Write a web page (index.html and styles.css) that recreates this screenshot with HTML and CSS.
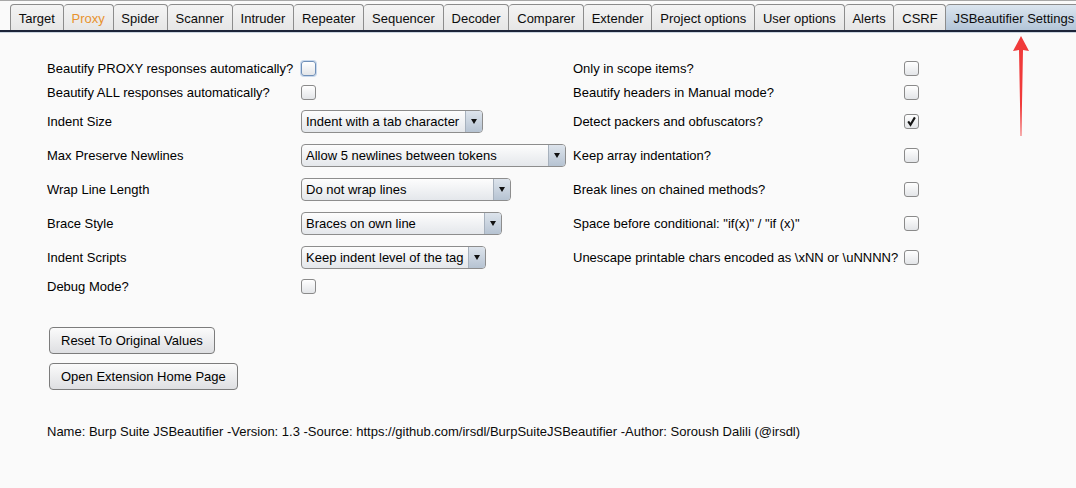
FILE: index.html
```html
<!DOCTYPE html>
<html>
<head>
<meta charset="utf-8">
<link rel="stylesheet" href="styles.css">
</head>
<body>
<div class="app">
  <div class="tabbar">
    <div class="tab">Target</div>
    <div class="tab proxy">Proxy</div>
    <div class="tab">Spider</div>
    <div class="tab">Scanner</div>
    <div class="tab">Intruder</div>
    <div class="tab">Repeater</div>
    <div class="tab">Sequencer</div>
    <div class="tab">Decoder</div>
    <div class="tab">Comparer</div>
    <div class="tab">Extender</div>
    <div class="tab">Project options</div>
    <div class="tab">User options</div>
    <div class="tab">Alerts</div>
    <div class="tab">CSRF</div>
    <div class="tab active">JSBeautifier Settings</div>
  </div>
  <div class="tabline"></div>
  <div class="content">
    <div class="form">
      <div class="lbl">Beautify PROXY responses automatically?</div>
      <div class="ctl"><span class="cb focus"></span></div>
      <div class="lbl">Only in scope items?</div>
      <div class="ctl"><span class="cb"></span></div>

      <div class="lbl">Beautify ALL responses automatically?</div>
      <div class="ctl"><span class="cb"></span></div>
      <div class="lbl">Beautify headers in Manual mode?</div>
      <div class="ctl"><span class="cb"></span></div>

      <div class="lbl">Indent Size</div>
      <div class="ctl"><div class="combo w182"><span class="val">Indent with a tab character</span><span class="arr"></span></div></div>
      <div class="lbl">Detect packers and obfuscators?</div>
      <div class="ctl"><span class="cb checked"><svg width="11" height="11" viewBox="0 0 11 11"><path d="M2.2 5.4 L4.5 8.8 L8.9 1.4" fill="none" stroke="#151515" stroke-width="2.1"/></svg></span></div>

      <div class="lbl">Max Preserve Newlines</div>
      <div class="ctl"><div class="combo w265"><span class="val">Allow 5 newlines between tokens</span><span class="arr"></span></div></div>
      <div class="lbl">Keep array indentation?</div>
      <div class="ctl"><span class="cb"></span></div>

      <div class="lbl">Wrap Line Length</div>
      <div class="ctl"><div class="combo w210"><span class="val">Do not wrap lines</span><span class="arr"></span></div></div>
      <div class="lbl">Break lines on chained methods?</div>
      <div class="ctl"><span class="cb"></span></div>

      <div class="lbl">Brace Style</div>
      <div class="ctl"><div class="combo w201"><span class="val">Braces on own line</span><span class="arr"></span></div></div>
      <div class="lbl">Space before conditional: "if(x)" / "if (x)"</div>
      <div class="ctl"><span class="cb"></span></div>

      <div class="lbl">Indent Scripts</div>
      <div class="ctl"><div class="combo w185"><span class="val">Keep indent level of the tag</span><span class="arr"></span></div></div>
      <div class="lbl">Unescape printable chars encoded as \xNN or \uNNNN?</div>
      <div class="ctl"><span class="cb"></span></div>

      <div class="lbl">Debug Mode?</div>
      <div class="ctl"><span class="cb"></span></div>
      <div class="lbl"></div>
      <div class="ctl"></div>
    </div>
    <div class="buttons">
      <button class="btn">Reset To Original Values</button>
      <button class="btn">Open Extension Home Page</button>
    </div>
    <div class="footer">Name: Burp Suite JSBeautifier -Version: 1.3 -Source: https://github.com/irsdl/BurpSuiteJSBeautifier -Author: Soroush Dalili (@irsdl)</div>
  </div>
  <svg class="arrow" width="20" height="104" viewBox="0 0 20 104">
    <path d="M10 0 L18 15 L12 14 L10.4 100 L9.6 100 L8 14 L2 15 Z" fill="#f03a3a"/>
  </svg>
</div>
</body>
</html>
```
FILE: styles.css
```css
html, body {
  margin: 0;
  padding: 0;
  background: #fafafa;
}
body {
  font-family: "Liberation Sans", Arial, sans-serif;
  font-size: 13px;
  color: #000;
}
.app {
  position: relative;
  width: 1076px;
  height: 488px;
  overflow: hidden;
  background: #fafafa;
  border-top: 1px solid #a8a8a8;
  box-sizing: border-box;
}
.tabbar {
  display: flex;
  align-items: flex-end;
  padding: 3px 0 0 10px;
  height: 29px;
  box-sizing: border-box;
}
.tab {
  height: 26px;
  line-height: 27px;
  padding: 0 7.8px;
  box-sizing: border-box;
  border: 1px solid #8c8c8c;
  border-bottom: none;
  border-left: none;
  border-radius: 4px 4px 0 0;
  background: linear-gradient(#f4f4f4, #e6e6e6);
  white-space: nowrap;
  color: #0c0c0c;
}
.tab:first-child {
  border-left: 1px solid #8c8c8c;
}
.tab.proxy {
  color: #e8922e;
}
.tab.active {
  background: linear-gradient(#dbe5ef, #b3c5d8);
  flex: 1;
  padding: 0 0 0 7px;
  border-right: none;
  border-radius: 4px 0 0 0;
}
.tabline {
  height: 2px;
  background: #1c2438;
  border-bottom: 1px solid #c9d3de;
}
.content {
  padding: 23px 0 0 47px;
}
.form {
  display: grid;
  grid-template-columns: 254px 272px 331px 20px;
  grid-template-rows: 24px 24px 34px 34px 34px 34px 34px 24px;
}
.lbl {
  display: flex;
  align-items: center;
  white-space: nowrap;
}
.ctl {
  display: flex;
  align-items: center;
}
.cb {
  width: 13px;
  height: 13px;
  border: 1px solid #8a8a8a;
  border-radius: 3px;
  background: linear-gradient(#ffffff, #e3e5e8);
  display: flex;
  align-items: center;
  justify-content: center;
  box-sizing: content-box;
}
.cb.focus {
  border-color: #6f8fb8;
  box-shadow: 0 0 0 1px #c8d8ec;
}
.combo {
  height: 23px;
  box-sizing: border-box;
  border: 1px solid #8d8d8d;
  border-radius: 4px;
  background: linear-gradient(#fdfdfd, #e4e7eb);
  display: flex;
  align-items: stretch;
  overflow: hidden;
}
.combo .val {
  flex: 1;
  padding-left: 4px;
  display: flex;
  align-items: center;
  white-space: nowrap;
}
.combo .arr {
  width: 16px;
  border-left: 1px solid #a7b1bd;
  background: linear-gradient(#dde4ec, #b6c3d2);
  position: relative;
}
.combo .arr::after {
  content: "";
  position: absolute;
  left: 5px;
  top: 8px;
  border-left: 3px solid transparent;
  border-right: 3px solid transparent;
  border-top: 5px solid #111;
}
.w182 { width: 182px; }
.w265 { width: 265px; }
.w210 { width: 210px; }
.w201 { width: 201px; }
.w185 { width: 185px; }
.buttons {
  display: flex;
  flex-direction: column;
  align-items: flex-start;
  gap: 9px;
  padding: 29px 0 0 2px;
}
.btn {
  font-family: "Liberation Sans", Arial, sans-serif;
  font-size: 13px;
  color: #000;
  height: 27px;
  padding: 0 11px;
  border: 1px solid #7c7c7c;
  border-radius: 4px;
  background: linear-gradient(#fbfbfb, #dedfe2);
  margin: 0;
}
.footer {
  padding-top: 34px;
  white-space: nowrap;
  color: #0a0a0a;
}
.arrow {
  position: absolute;
  left: 1011px;
  top: 35px;
}
```
